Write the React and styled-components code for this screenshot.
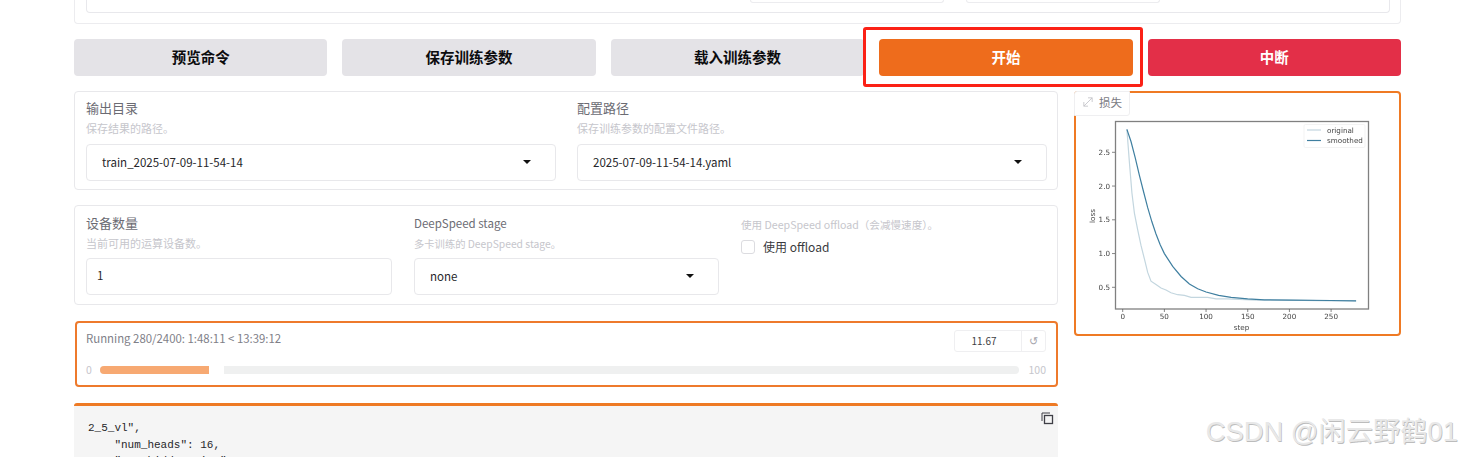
import React from 'react';
import styled, { createGlobalStyle } from 'styled-components';

const GlobalStyle = createGlobalStyle`
  html, body {
    margin: 0;
    background: #fff;
    overflow: hidden;
  }
  body {
    font-family: "Noto Sans CJK SC", "Noto Sans", sans-serif;
  }
`;

const Page = styled.div`
  position: relative;
  width: 1464px;
  height: 457px;
  overflow: hidden;
  box-sizing: border-box;
  padding: 0 63px 0 74px;
`;

const TopPanel = styled.div`
  height: 24px;
  box-sizing: border-box;
  border: 1px solid #ececef;
  border-top: none;
  border-radius: 0 0 4px 4px;
  padding: 0 10px 10px 11px;
`;

const TopInner = styled.div`
  height: 13px;
  box-sizing: border-box;
  border: 1px solid #e8e8ec;
  border-top: none;
  border-radius: 0 0 4px 4px;
  display: flex;
  justify-content: flex-end;
  gap: 22px;
  padding-right: 229px;
`;

const TopInput = styled.div`
  width: 194px;
  height: 3px;
  box-sizing: border-box;
  border: 1px solid #ececef;
  border-top: none;
  border-radius: 0 0 3px 3px;
`;

const ButtonRow = styled.div`
  display: flex;
  gap: 15px;
  margin-top: 15px;
`;

const ActionButton = styled.button`
  position: relative;
  flex: 1;
  height: 37px;
  border: none;
  border-radius: 4px;
  padding: 0 0 2px;
  font-family: "Noto Sans CJK SC", sans-serif;
  font-size: 14.5px;
  font-weight: 700;
  color: ${(p) => (p.$variant ? '#fff' : '#0c0c0e')};
  background: ${(p) =>
    p.$variant === 'primary' ? '#ee6c1c' : p.$variant === 'stop' ? '#e32f48' : '#e4e3e7'};
`;

const Highlight = styled.span`
  position: absolute;
  left: -16px;
  right: -10px;
  top: -12px;
  bottom: -11px;
  border: 3px solid #fb2116;
  border-radius: 3px;
  pointer-events: none;
`;

const Columns = styled.div`
  display: flex;
  gap: 16px;
  margin-top: 15px;
`;

const LeftColumn = styled.div`
  width: 984px;
  flex: none;
  display: flex;
  flex-direction: column;
`;

const RightColumn = styled.div`
  flex: 1;
`;

const Panel = styled.div`
  box-sizing: border-box;
  height: ${(p) => p.$height}px;
  margin-bottom: 15px;
  border: 1px solid #e8e8eb;
  border-radius: 4px;
  padding: ${(p) => p.$top}px 10px 0 11px;
  display: grid;
  grid-template-columns: ${(p) => p.$columns};
  column-gap: ${(p) => p.$gap}px;
`;

const Field = styled.div`
  display: flex;
  flex-direction: column;
`;

const Label = styled.div`
  font-size: ${(p) => p.$size || 13}px;
  line-height: 18px;
  height: 19px;
  color: #6b6b73;
`;

const Hint = styled.div`
  font-size: ${(p) => p.$size || 11}px;
  line-height: 15px;
  height: ${(p) => p.$height || 23}px;
  margin-top: 3px;
  color: #c6c6cc;
  white-space: nowrap;
`;

const SelectBox = styled.div`
  box-sizing: border-box;
  height: 37px;
  border: 1px solid #e8e8eb;
  border-radius: 4px;
  padding: 0 24px 1px 15px;
  display: flex;
  align-items: center;
  justify-content: space-between;
  font-size: 11.5px;
  color: #27272a;
`;

const InputBox = styled(SelectBox)`
  padding-left: 10px;
  padding-bottom: 4px;
`;

const Caret = styled.span`
  width: 0;
  height: 0;
  border-left: 4.5px solid transparent;
  border-right: 4.5px solid transparent;
  border-top: 4.5px solid #111;
`;

const OffloadHint = styled.div`
  font-size: 10.6px;
  line-height: 15px;
  margin-top: 3px;
  color: #c6c6cc;
  white-space: nowrap;
`;

const CheckRow = styled.label`
  display: flex;
  align-items: center;
  gap: 8px;
  margin-top: 6px;
  font-size: 12px;
  line-height: 18px;
  color: #3a3a40;
`;

const CheckBox = styled.span`
  box-sizing: border-box;
  width: 14px;
  height: 14px;
  border: 1px solid #dcdce0;
  border-radius: 3px;
`;

const ProgressPanel = styled.div`
  box-sizing: border-box;
  height: 66px;
  margin: 1px 0 15px 1px;
  border: 2px solid #ee7a2c;
  border-radius: 4px;
  padding: 7px 10px 0 9px;
`;

const ProgressHead = styled.div`
  display: flex;
  justify-content: space-between;
  align-items: flex-start;
  height: 30px;
`;

const ProgressText = styled.div`
  font-size: 11.4px;
  line-height: 18px;
  margin-top: -1px;
  color: #808088;
`;

const NumberBox = styled.div`
  box-sizing: border-box;
  width: 92px;
  height: 22px;
  border: 1px solid #efeff1;
  border-radius: 3px;
  display: flex;
  font-size: 10px;
  color: #3f3f46;
`;

const NumberValue = styled.div`
  flex: 1;
  text-align: center;
  line-height: 19px;
  padding-right: 8px;
`;

const ResetCell = styled.div`
  width: 23px;
  border-left: 1px solid #efeff1;
  display: flex;
  align-items: center;
  justify-content: center;
  font-family: "DejaVu Sans", sans-serif;
  font-size: 11px;
  color: #a6a6ad;
`;

const SliderRow = styled.div`
  display: flex;
  align-items: center;
  font-size: 10.5px;
  line-height: 14px;
  color: #c6c6cc;
  margin-top: 3px;
`;

const SliderTrack = styled.div`
  position: relative;
  flex: 1;
  height: 8px;
  margin: 0 10px 0 8px;
  border-radius: 4px;
  background: #eff0f0;
  overflow: hidden;
`;

const SliderFill = styled.div`
  height: 100%;
  background: #f7a972;
  box-shadow: 15px 0 0 #fff;
`;

const CodeBlock = styled.div`
  position: relative;
  box-sizing: border-box;
  height: 60px;
  margin-top: 1px;
  border-top: 3px solid #ee7a24;
  border-radius: 3px 3px 0 0;
  background: #f5f5f5;
  overflow: hidden;
  padding: 14px 14px 0;
`;

const CodeText = styled.pre`
  margin: 0;
  font-family: "Liberation Mono", monospace;
  font-size: 11px;
  line-height: 16.5px;
  color: #27272a;
`;

const CopyIcon = styled.svg`
  position: absolute;
  right: 4px;
  top: 5px;
`;

const PlotPanel = styled.div`
  position: relative;
  box-sizing: border-box;
  height: 245px;
  border: 2px solid #ef7a24;
  border-radius: 4px;
  background: #fff;
`;

const PlotTab = styled.div`
  position: absolute;
  left: -2px;
  top: -2px;
  box-sizing: border-box;
  width: 56px;
  height: 25px;
  border: 1px solid #efeff1;
  border-radius: 3px 0 3px 0;
  background: #fff;
  display: flex;
  align-items: center;
  gap: 6px;
  padding: 0 0 3px 8px;
  font-size: 11.5px;
  color: #7b7b83;
`;

const ChartSvg = styled.svg`
  display: block;
  filter: blur(0.3px);
  font-family: "DejaVu Sans", sans-serif;
  font-size: 7.2px;
  fill: #444;
`;

const Watermark = styled.div`
  position: absolute;
  right: 6px;
  bottom: 9px;
  font-family: "Liberation Sans", "Noto Sans CJK SC", sans-serif;
  font-size: 27.3px;
  line-height: 32px;
  white-space: nowrap;
  color: #e8e8e8;
  text-shadow: 0.7px 0.7px 0 #bcbcbc;
  pointer-events: none;
`;

// chart data, read off the plot
const toX = (step) => 1122.7 + step * 0.8336;
const toY = (loss) => 287.3 - (loss - 0.5) * 67.5;
const toPoints = (rows) => rows.map(([s, l]) => `${toX(s).toFixed(1)},${toY(l).toFixed(1)}`).join(' ');

const original = [
  [5, 2.84], [8, 2.35], [11, 1.9], [14, 1.6], [18, 1.35], [22, 1.12], [26, 0.92], [30, 0.72],
  [34, 0.59], [40, 0.54], [46, 0.49], [52, 0.46], [58, 0.42], [66, 0.39], [74, 0.38], [82, 0.35],
  [92, 0.35], [102, 0.35], [112, 0.33], [125, 0.33], [140, 0.32], [160, 0.31], [200, 0.31], [250, 0.3], [280, 0.3],
];

const smoothed = [
  [5, 2.84], [10, 2.66], [15, 2.42], [20, 2.16], [25, 1.92], [30, 1.68], [35, 1.47], [40, 1.29],
  [45, 1.13], [50, 1.0], [60, 0.81], [70, 0.66], [80, 0.55], [90, 0.48], [100, 0.43], [115, 0.38],
  [130, 0.35], [150, 0.33], [170, 0.315], [200, 0.31], [250, 0.305], [280, 0.3],
];

const LossChart = () => (
  <ChartSvg width="323" height="241" viewBox="1076 93 323 241">
    <rect x="1115.5" y="121.5" width="253" height="187.5" fill="#fff" stroke="#808080" strokeWidth="1.3" />
    {[0, 50, 100, 150, 200, 250].map((s) => (
      <g key={s}>
        <line x1={toX(s)} x2={toX(s)} y1="309" y2="312" stroke="#555" strokeWidth="0.7" />
        <text x={toX(s)} y="319" textAnchor="middle">{s}</text>
      </g>
    ))}
    {[0.5, 1, 1.5, 2, 2.5].map((l) => (
      <g key={l}>
        <line x1="1112" x2="1115" y1={toY(l)} y2={toY(l)} stroke="#555" strokeWidth="0.7" />
        <text x="1110" y={toY(l) + 2.5} textAnchor="end">{l.toFixed(1)}</text>
      </g>
    ))}
    <text x="1241.5" y="330" textAnchor="middle">step</text>
    <text x="1095" y="216" textAnchor="middle" transform="rotate(-90 1095 216)">loss</text>
    <polyline points={toPoints(original)} fill="none" stroke="#c3d6df" strokeWidth="1.2" />
    <polyline points={toPoints(smoothed)} fill="none" stroke="#3f7fa0" strokeWidth="1.2" />
    <rect x="1304" y="124.5" width="61" height="23" rx="1.5" fill="#fff" stroke="#eeeeee" strokeWidth="0.7" />
    <line x1="1307" x2="1321" y1="130" y2="130" stroke="#c3d6df" strokeWidth="1.2" />
    <line x1="1307" x2="1321" y1="140.5" y2="140.5" stroke="#3f7fa0" strokeWidth="1.2" />
    <text x="1327" y="132.5">original</text>
    <text x="1327" y="143">smoothed</text>
  </ChartSvg>
);

const App = () => (
  <Page>
    <GlobalStyle />
    <TopPanel>
      <TopInner>
        <TopInput />
        <TopInput />
      </TopInner>
    </TopPanel>

    <ButtonRow>
      <ActionButton>预览命令</ActionButton>
      <ActionButton>保存训练参数</ActionButton>
      <ActionButton>载入训练参数</ActionButton>
      <ActionButton $variant="primary">
        开始
        <Highlight />
      </ActionButton>
      <ActionButton $variant="stop">中断</ActionButton>
    </ButtonRow>

    <Columns>
      <LeftColumn>
        <Panel $height={99} $top={7} $gap={21} $columns="470px 470px">
          <Field>
            <Label>输出目录</Label>
            <Hint>保存结果的路径。</Hint>
            <SelectBox>
              train_2025-07-09-11-54-14
              <Caret />
            </SelectBox>
          </Field>
          <Field>
            <Label>配置路径</Label>
            <Hint>保存训练参数的配置文件路径。</Hint>
            <SelectBox>
              2025-07-09-11-54-14.yaml
              <Caret />
            </SelectBox>
          </Field>
        </Panel>

        <Panel $height={100} $top={8} $gap={22} $columns="306px 305px 306px">
          <Field>
            <Label>设备数量</Label>
            <Hint $height={22}>当前可用的运算设备数。</Hint>
            <InputBox>1</InputBox>
          </Field>
          <Field>
            <Label $size={11.5}>DeepSpeed stage</Label>
            <Hint $height={22} $size={10.3}>多卡训练的 DeepSpeed stage。</Hint>
            <SelectBox>
              none
              <Caret />
            </SelectBox>
          </Field>
          <Field>
            <OffloadHint>使用 DeepSpeed offload（会减慢速度）。</OffloadHint>
            <CheckRow>
              <CheckBox />
              使用 offload
            </CheckRow>
          </Field>
        </Panel>

        <ProgressPanel>
          <ProgressHead>
            <ProgressText>Running 280/2400: 1:48:11 &lt; 13:39:12</ProgressText>
            <NumberBox>
              <NumberValue>11.67</NumberValue>
              <ResetCell>↺</ResetCell>
            </NumberBox>
          </ProgressHead>
          <SliderRow>
            0
            <SliderTrack>
              <SliderFill style={{ width: `${(109 / 919) * 100}%` }} />
            </SliderTrack>
            100
          </SliderRow>
        </ProgressPanel>

        <CodeBlock>
          <CopyIcon width="14" height="14" viewBox="0 0 14 14" fill="none" stroke="#3f3f46" strokeWidth="1">
            <path d="M2 10V2h8" />
            <rect x="4.5" y="4.5" width="8" height="8" strokeWidth="1.3" />
          </CopyIcon>
          <CodeText>{`2_5_vl",
    "num_heads": 16,
    "out_hidden_size": 1536,`}</CodeText>
        </CodeBlock>
      </LeftColumn>

      <RightColumn>
        <PlotPanel>
          <PlotTab>
            <svg width="10" height="10" viewBox="0 0 12 12" fill="none" stroke="#c0c0c6" strokeWidth="1">
              <path d="M1 11 11 1M1 6v5h5M6 1h5v5" />
            </svg>
            损失
          </PlotTab>
          <LossChart />
        </PlotPanel>
      </RightColumn>
    </Columns>

    <Watermark>CSDN @闲云野鹤01</Watermark>
  </Page>
);

export default App;
